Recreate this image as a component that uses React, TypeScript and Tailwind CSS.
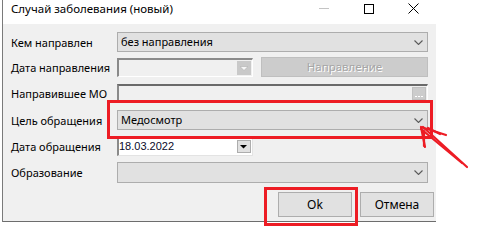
import React from 'react';

const ui = { fontFamily: '"Noto Sans", "Liberation Sans", sans-serif' };
const dtp = { fontFamily: '"Liberation Sans", Arial, sans-serif' };

function Chevron() {
  return (
    <svg width="9" height="5" viewBox="0 0 9 5" className="shrink-0">
      <path d="M0.5 0.5 L4.5 4.5 L8.5 0.5" fill="none" stroke="#5a5a5a" strokeWidth="1.1" />
    </svg>
  );
}

function Combo({ value }: { value?: string }) {
  return (
    <div className="flex h-full items-center justify-between border border-[#adadad] bg-[#e1e1e1] pl-[3px] pr-[4px]">
      <span className="text-[11px] text-black">{value}</span>
      <Chevron />
    </div>
  );
}

function Row({ label, children, className }: { label: string; children: React.ReactNode; className: string }) {
  return (
    <div className={`grid grid-cols-[106px_1fr] items-center pr-[8px] ${className}`}>
      <span className="text-[11px] leading-none text-black">{label}</span>
      <div className="h-full">{children}</div>
    </div>
  );
}

export default function App() {
  return (
    <div className="relative h-[245px] w-[494px] overflow-hidden bg-white pl-[2px]" style={ui}>
      <div className="w-[434px] border-l border-[#7a7a7a]">
        {/* Title bar */}
        <div className="flex h-[24px] items-start bg-white">
          <span className="ml-[8px] flex-1 pt-[1px] text-[11.5px] leading-[16px] text-black">Случай заболевания (новый)</span>
          <div className="flex w-[45px] justify-center pt-[8px]">
            <div className="h-px w-[10px] bg-[#c4c4c4]" />
          </div>
          <div className="flex w-[45px] justify-center pt-[4px]">
            <div className="h-[10px] w-[10px] border border-black" />
          </div>
          <div className="flex w-[45px] justify-center pt-[3px]">
            <svg width="11" height="11" viewBox="0 0 11 11">
              <path d="M0.5 0.5 L10.5 10.5 M10.5 0.5 L0.5 10.5" stroke="#000" strokeWidth="1" />
            </svg>
          </div>
        </div>

        {/* Body */}
        <div className="flex h-[198px] flex-col border-b border-[#6d6d6d] bg-[#f0f0f0] pl-[8px]">
          <Row label="Кем направлен" className="mt-[8px] h-[20px]">
            <Combo value="без направления" />
          </Row>

          <Row label="Дата направления" className="mt-[5px] h-[20px]">
            <div className="flex h-full items-center gap-[8px]">
              <div className="mt-[1px] flex h-[19px] w-[136px] items-center justify-end border-t-2 border-l-2 border-r border-b border-t-[#8a8a8a] border-l-[#8a8a8a] border-r-white border-b-white bg-[#f0f0f0] pr-[1px]">
                <div className="flex h-[14px] w-[14px] items-center justify-center bg-[#c9c9c9]">
                  <svg width="8" height="5" viewBox="0 0 8 5">
                    <path d="M0 0.5 H8 L4 4.5 Z" fill="#f6f6f6" stroke="#b0b0b0" strokeWidth="0.6" />
                  </svg>
                </div>
              </div>
              <div className="flex h-full flex-1 items-center justify-center border border-[#bfbfbf] bg-[#cccccc] text-[11.5px] text-[#a6a6a6] [text-shadow:1px_1px_0_#ffffff]">
                Направление
              </div>
            </div>
          </Row>

          <Row label="Направившее МО" className="mt-[7px] h-[18px]">
            <div className="flex h-full items-start justify-end border-t-2 border-l-2 border-r border-t-[#6a6a6a] border-l-[#8a8a8a] border-r-white bg-[#f0f0f0] pr-[1px] pt-[1px]">
              <div className="flex h-[13px] w-[14px] items-end justify-center gap-[1px] border border-[#c0c0c0] bg-[#cccccc] pb-[2px]">
                <div className="h-px w-[2px] bg-white" />
                <div className="h-px w-[2px] bg-white" />
                <div className="h-px w-[2px] bg-white" />
              </div>
            </div>
          </Row>

          <Row label="Цель обращения" className="mt-[8px] h-[20px]">
            <Combo value="Медосмотр" />
          </Row>

          <Row label="Дата обращения" className="mt-[6px] h-[20px]">
            <div className="flex h-full w-[136px] items-center justify-between border-t-2 border-l-2 border-r border-b border-t-[#8a8a8a] border-l-[#8a8a8a] border-r-[#e3e3e3] border-b-[#e3e3e3] bg-white pr-[1px]">
              <span className="text-[11px] leading-none text-[#0a0a2a]" style={dtp}>18.03.2022</span>
              <div className="flex h-[13px] w-[14px] items-center justify-center border border-[#adadad] bg-[#e1e1e1]">
                <svg width="8" height="4" viewBox="0 0 8 4">
                  <path d="M0 0 H7 L3.5 3.5 Z" fill="#000" />
                </svg>
              </div>
            </div>
          </Row>

          <Row label="Образование" className="mt-[6px] h-[21px]">
            <Combo />
          </Row>

          <div className="mt-[9px] flex h-[25px] justify-end gap-[8px] pr-[2px]">
            <button className="w-[74px] border border-[#adadad] bg-[#e1e1e1] text-[12px] text-black">Ok</button>
            <button className="w-[74px] border border-[#adadad] bg-[#e1e1e1] text-[12px] text-black">Отмена</button>
          </div>
        </div>
      </div>

      {/* Red annotations */}
      <div className="pointer-events-none absolute left-[107px] top-[100px] h-[39px] w-[326px] border-[3px] border-[#ed1c24]" />
      <div className="pointer-events-none absolute left-[264px] top-[187px] h-[39px] w-[94px] border-[3px] border-[#ed1c24]" />
      <svg className="pointer-events-none absolute left-0 top-0" width="494" height="245" viewBox="0 0 494 245">
        <g stroke="#ed1c24" strokeWidth="2.2" fill="none" strokeLinecap="round" strokeLinejoin="round">
          <path d="M446 135 L421 127 L425 147" />
          <path d="M423 127 L467 167" />
          <path d="M421 129 L462 163" />
          <path d="M428 128 L440 134" />
          <path d="M424 131 L424 146" />
        </g>
      </svg>
    </div>
  );
}
